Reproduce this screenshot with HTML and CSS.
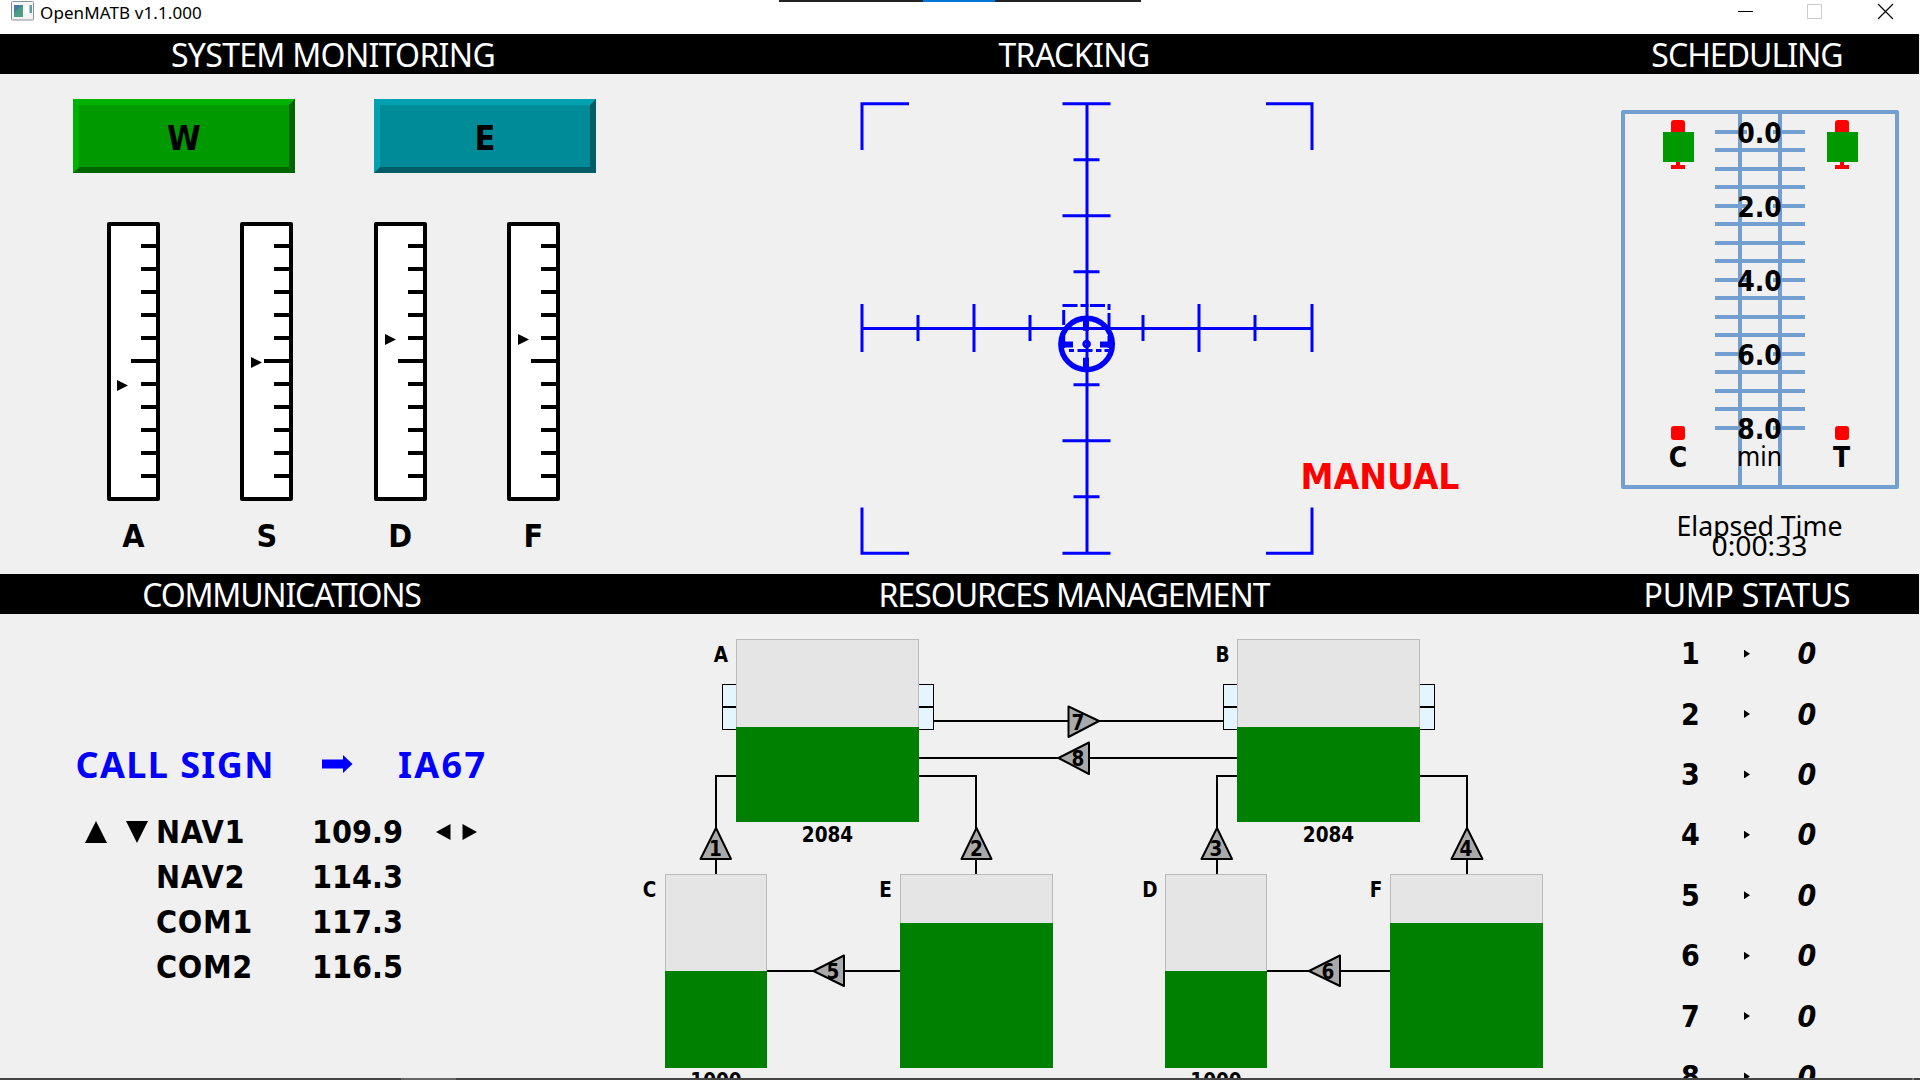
FILE: index.html
```html
<!DOCTYPE html>
<html lang="en">
<head>
<meta charset="utf-8">
<title>OpenMATB v1.1.000</title>
<link rel="stylesheet" href="styles.css">
</head>
<body>
<header class="titlebar">
  <svg class="app-icon" width="24" height="20" viewBox="0 0 24 20">
    <rect x=".5" y=".5" width="22" height="18.5" rx="1" fill="#f4f4f4" stroke="#8b9097"/>
    <rect x="3" y="4" width="9" height="12" fill="#4d9c86"/>
    <path d="M3 4h9L3 12z" fill="#4a7f9c"/>
    <rect x="14" y="4" width="3.500" height="8" fill="#fff"/>
    <rect x="18.500" y="4" width="2.500" height="8" fill="#5f9fa0"/>
  </svg>
  <span class="app-name">OpenMATB v1.1.000</span>
  <svg class="controls" width="160" height="20" viewBox="0 0 160 20" shape-rendering="crispEdges">
    <rect x="4" y="11" width="15" height="1" fill="#000"/>
    <rect x="73.500" y="4.500" width="14" height="14" fill="none" stroke="#ccc"/>
    <path d="M144 4l15 15M159 4l-15 15" stroke="#000" stroke-width="1.200" shape-rendering="auto"/>
  </svg>
  <div class="dock"></div>
</header>

<main>
  <div class="row top">
    <section class="panel">
      <h2 class="t-sys">SYSTEM MONITORING</h2>
      <div class="lights">
        <div class="light green">W</div>
        <div class="light teal">E</div>
      </div>
      <div class="gauges">
        <div class="gauge">
          <svg width="53" height="279"><use href="#scale"/><path d="M10 158v11l11-5.500z"/></svg>
          <b>A</b>
        </div>
        <div class="gauge">
          <svg width="53" height="279"><use href="#scale"/><path d="M11 135v11l11-5.500z"/></svg>
          <b>S</b>
        </div>
        <div class="gauge">
          <svg width="53" height="279"><use href="#scale"/><path d="M11 112v11l11-5.500z"/></svg>
          <b>D</b>
        </div>
        <div class="gauge">
          <svg width="53" height="279"><use href="#scale"/><path d="M11 112v11l11-5.500z"/></svg>
          <b>F</b>
        </div>
      </div>
    </section>

    <section class="panel">
      <h2 class="t-track">TRACKING</h2>
      <svg width="909" height="500" viewBox="666 74 909 500">
        <g fill="none" stroke="#00f" stroke-width="3">
          <path d="M909 103.700H862V150M1266 103.700H1312V150M909 553.300H862V507.500M1266 553.300H1312V507.500"/>
          <path d="M861 328.500H1313M1087 103V554"/>
          <path d="M1062.500 103.700h48M1062.500 215.700h48M1062.500 440.700h48M1062.500 553.300h48"/>
          <path d="M1073.500 159.700h26M1073.500 271.700h26M1073.500 384.700h26M1073.500 496.700h26"/>
          <path d="M862 304v48M974 304v48M1199 304v48M1312 304v48"/>
          <path d="M918 315v26M1030 315v26M1143 315v26M1255 315v26"/>
          <path d="M1062.500 305.600h15M1080.500 305.600h8M1090 305.600h15M1109 304v6M1109 313v18M1063.700 310v15"/>
          <path d="M1069 350.600h5M1077.500 350.600h15M1096 350.600h5.500M1104.500 350.600h5M1063.700 336v12M1109 336v12"/>
          <circle cx="1086.600" cy="344" r="25.700" stroke-width="5.500"/>
          <path d="M1086 320v10.700M1086 357.700v11M1062 344.600h11M1100 344.600h11" stroke-width="6"/>
          <circle cx="1086.600" cy="344" r="2.800" stroke-width="3"/>
        </g>
        <text class="bold manual" x="1300.500" y="489" textLength="159" lengthAdjust="spacingAndGlyphs">MANUAL</text>
      </svg>
    </section>

    <section class="panel">
      <h2 class="t-sched">SCHEDULING</h2>
      <svg width="344" height="500" viewBox="1575 74 344 500">
        <g fill="none" stroke="#729fcf" stroke-width="4">
          <rect x="1623" y="112" width="274" height="375" stroke-linejoin="round"/>
          <path d="M1740 112V487M1780 112V487"/>
          <path d="M1715 150h90M1715 169h90M1715 187h90M1715 224h90M1715 243h90M1715 261h90M1715 298h90M1715 317h90M1715 335h90M1715 372h90M1715 391h90M1715 409h90"/>
          <path d="M1715 132h32M1773 132h32M1715 206h32M1773 206h32M1715 280h32M1773 280h32M1715 354h32M1773 354h32M1715 428h32M1773 428h32"/>
        </g>
        <g id="lane">
          <rect x="1671" y="120" width="14" height="20" rx="3" fill="#f00"/>
          <path d="M1676 160h4v5h5v4h-14v-4h5z" fill="#f00"/>
          <rect x="1663" y="132" width="31" height="30" fill="#090"/>
          <rect x="1671" y="426" width="14" height="14" rx="3" fill="#f00"/>
        </g>
        <use href="#lane" x="164"/>
        <g class="bold mark">
          <text x="1759.500" y="143">0.0</text>
          <text x="1759.500" y="217">2.0</text>
          <text x="1759.500" y="291">4.0</text>
          <text x="1759.500" y="365">6.0</text>
          <text x="1759.500" y="439">8.0</text>
          <text x="1678" y="466.500">C</text>
          <text x="1841.500" y="466.500">T</text>
        </g>
        <g class="plain">
          <text x="1737" y="466" textLength="45" lengthAdjust="spacingAndGlyphs">min</text>
          <text x="1676.500" y="536" textLength="166" lengthAdjust="spacingAndGlyphs">Elapsed Time</text>
          <text x="1711.500" y="556" textLength="96" lengthAdjust="spacingAndGlyphs">0:00:33</text>
        </g>
      </svg>
    </section>
  </div>

  <div class="row bottom">
    <section class="panel">
      <h2 class="t-comm">COMMUNICATIONS</h2>
      <div class="callsign">
        <span class="cs-label">CALL SIGN</span>
        <svg width="31" height="20" viewBox="0 0 31 20"><path d="M0 5.500h21V1l9.500 9L21 19v-4.500H0z" fill="#00f"/></svg>
        <span class="cs-value">IA67</span>
      </div>
      <div class="radios">
        <svg width="63" height="22"><path d="M0 22L11 0l11 22zM41 0h22L52 22z"/></svg>
        <span class="name">NAV1</span><span>109.9</span>
        <svg width="41" height="16"><path d="M14.500 0v16L0 8zM26.500 0v16L41 8z"/></svg>
        <i></i><span class="name">NAV2</span><span>114.3</span><i></i>
        <i></i><span class="name">COM1</span><span>117.3</span><i></i>
        <i></i><span class="name">COM2</span><span>116.5</span><i></i>
      </div>
    </section>

    <section class="panel">
      <h2 class="t-res">RESOURCES MANAGEMENT</h2>
      <svg width="1002" height="464" viewBox="573 614 1002 464">
        <g fill="none" stroke="#000" stroke-width="2">
          <path d="M934 721H1223M919 758H1237M736 776H716V874M919 776H976V874M1237 776H1217V874M1420 776H1467V874M767 971H900M1267 971H1390"/>
        </g>
        <g fill="#e5f5ff" stroke="#000">
          <rect x="722.500" y="684.500" width="211" height="45"/>
          <rect x="1223.500" y="684.500" width="211" height="45"/>
          <path d="M722 707h212M1223 707h212" stroke-width="2"/>
        </g>
        <g fill="#e5e5e5" stroke="#bbb">
          <rect x="736.500" y="639.500" width="182" height="182"/>
          <rect x="1237.500" y="639.500" width="182" height="182"/>
          <rect x="665.500" y="874.500" width="101" height="193"/>
          <rect x="900.500" y="874.500" width="152" height="193"/>
          <rect x="1165.500" y="874.500" width="101" height="193"/>
          <rect x="1390.500" y="874.500" width="152" height="193"/>
        </g>
        <g fill="#008000">
          <rect x="736" y="727" width="183" height="95"/>
          <rect x="1237" y="727" width="183" height="95"/>
          <rect x="665" y="971" width="102" height="97"/>
          <rect x="900" y="923" width="153" height="145"/>
          <rect x="1165" y="971" width="102" height="97"/>
          <rect x="1390" y="923" width="153" height="145"/>
        </g>
        <g fill="#a9a9a9" stroke="#000" stroke-width="2" stroke-linejoin="round">
          <path d="M716 828L731 859H700.500z"/>
          <path d="M976.500 828L991.500 859H961.500z"/>
          <path d="M1217 828L1232 859H1201.500z"/>
          <path d="M1467 828L1482.500 859H1451.500z"/>
          <path d="M1068.500 706.500L1099 721L1068.500 737z"/>
          <path d="M1089 742.500L1058.500 758L1089 774z"/>
          <path d="M844 955.500L813.500 971L844 986z"/>
          <path d="M1340 955.500L1309 971L1340 986z"/>
        </g>
        <g class="bold tank">
          <text x="721" y="662">A</text><text x="1222.500" y="662">B</text>
          <text x="649.500" y="897">C</text><text x="885.500" y="897">E</text>
          <text x="1150" y="897">D</text><text x="1376" y="897">F</text>
          <text x="827.500" y="842">2084</text><text x="1328.500" y="842">2084</text>
          <text x="716" y="1088">1000</text><text x="1216" y="1088">1000</text>
          <text x="715.500" y="856">1</text><text x="976.500" y="856">2</text>
          <text x="1216" y="856">3</text><text x="1466" y="856">4</text>
          <text x="833" y="979">5</text><text x="1328" y="979">6</text>
          <text x="1078" y="730">7</text><text x="1078" y="766">8</text>
        </g>
      </svg>
    </section>

    <section class="panel">
      <h2 class="t-pump">PUMP STATUS</h2>
      <div class="pumps">
        <b>1</b><s></s><em>0</em>
        <b>2</b><s></s><em>0</em>
        <b>3</b><s></s><em>0</em>
        <b>4</b><s></s><em>0</em>
        <b>5</b><s></s><em>0</em>
        <b>6</b><s></s><em>0</em>
        <b>7</b><s></s><em>0</em>
        <b>8</b><s></s><em>0</em>
      </div>
    </section>
  </div>
</main>
<footer class="taskbar"></footer>

<svg width="0" height="0" class="defs">
  <defs>
    <g id="scale">
      <rect x="2" y="2" width="49" height="275" fill="#fff" stroke="#000" stroke-width="4" stroke-linejoin="round"/>
      <path d="M34 24h17M34 47h17M34 70h17M34 93h17M34 116h17M24 139h27M34 162h17M34 185h17M34 208h17M34 231h17M34 254h17" stroke="#000" stroke-width="4"/>
    </g>
  </defs>
</svg>
</body>
</html>
```
FILE: styles.css
```css
* { box-sizing: border-box; }

body {
  margin: 0;
  width: 1920px;
  height: 1080px;
  overflow: hidden;
  display: flex;
  flex-direction: column;
  background: #f0f0f0;
  color: #000;
  font-family: "Noto Sans", sans-serif;
}

svg { display: block; flex: none; }
.defs { position: absolute; }

/* window title bar */
.titlebar {
  position: relative;
  flex: none;
  display: flex;
  align-items: flex-start;
  height: 34px;
  padding: 1px 26px 0 11px;
  background: #fff;
}
.app-icon { margin-right: 5px; }
.app-name { font-size: 17px; line-height: 24px; letter-spacing: 0.1px; }
.controls { margin: -1px 0 0 auto; }
.dock {
  position: absolute;
  left: 779px;
  top: 0;
  width: 362px;
  height: 2px;
  background: linear-gradient(90deg, #222 144px, #0078d7 144px 216px, #222 216px);
}

main { width: 1919px; flex: none; }
.row { display: grid; overflow: hidden; }
.top { grid-template-columns: 666px 909px 344px; height: 540px; }
.bottom { grid-template-columns: 573px 1002px 344px; height: 504px; }

h2 {
  margin: 0;
  height: 40px;
  background: #000;
  color: #fff;
  font-size: 32px;
  font-weight: 400;
  line-height: 42px;
  text-align: center;
  white-space: nowrap;
}
.t-sys { letter-spacing: -0.7px; }
.t-track { padding-right: 93px; letter-spacing: -0.6px; }
.t-sched { letter-spacing: -1px; }
.t-comm { padding-right: 10px; letter-spacing: -1.2px; }
.t-res { letter-spacing: -1px; }
.t-pump { letter-spacing: -0.25px; }

.bold, .light, .gauge b, .radios, .pumps {
  font-family: "DejaVu Sans Condensed", "DejaVu Sans", sans-serif;
  font-stretch: condensed;
  font-weight: 700;
}

/* system monitoring */
.lights { display: flex; gap: 79px; padding: 25px 0 0 73px; }
.light {
  width: 222px;
  height: 74px;
  border: 6px solid;
  font-size: 34px;
  line-height: 67px;
  text-align: center;
}
.green { background: #090; border-color: #00b200 #060 #060 #00b200; }
.teal { background: #008b99; border-color: #00a2b2 #005c66 #005c66 #00a2b2; }

.gauges { display: flex; gap: 80.300px; padding: 49px 0 0 107px; }
.gauge { display: flex; flex-direction: column; align-items: center; width: 53px; }
.gauge b { font-size: 32px; line-height: 38px; margin-top: 16px; }

/* svg labels */
.manual { fill: #f00; font-size: 36px; }
.mark { font-size: 28px; text-anchor: middle; }
.plain { font-size: 28px; }
.tank { font-size: 20.500px; text-anchor: middle; }

/* communications */
.callsign {
  display: flex;
  align-items: center;
  height: 50px;
  margin-top: 125px;
  padding-left: 75.500px;
  color: #00f;
  font-size: 36px;
  font-weight: 700;
}
.cs-label { width: 246.500px; letter-spacing: 1.400px; }
.cs-value { margin-left: 45px; letter-spacing: 2.300px; }
.radios {
  display: grid;
  grid-template-columns: 71px 156px 124px 41px;
  grid-auto-rows: 45px;
  align-items: center;
  margin-top: 20px;
  padding-left: 85px;
  font-size: 32px;
}
.radios .name { letter-spacing: 0.700px; }

/* pump status */
.pumps {
  display: grid;
  grid-template-columns: 35px 6px 42px;
  column-gap: 36px;
  grid-auto-rows: 60.400px;
  align-items: center;
  padding: 9.500px 0 0 98px;
  font-size: 30px;
}
.pumps b { text-align: center; }
.pumps em { text-align: center; }
.pumps s {
  width: 6px;
  height: 8px;
  background: #000;
  clip-path: polygon(0 0, 100% 50%, 0 100%);
}

.taskbar {
  flex: none;
  height: 2px;
  background: linear-gradient(90deg, #444 401px, #666 401px 456px, #444 456px 1912px, #777 1912px 1914px, #444 1914px);
}
```
